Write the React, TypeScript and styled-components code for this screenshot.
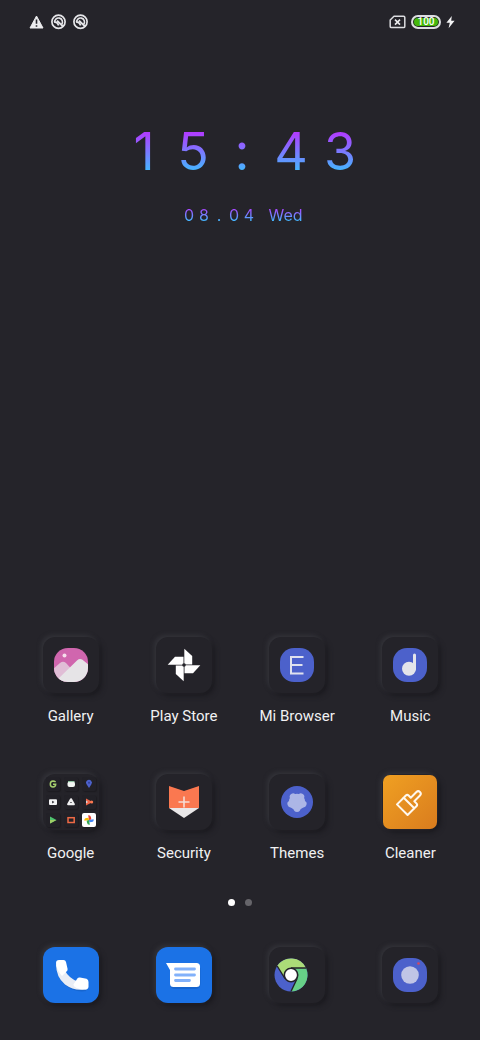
import React from 'react';
import styled, { createGlobalStyle, css } from 'styled-components';

const GlobalStyle = createGlobalStyle`
  *, *::before, *::after { box-sizing: border-box; }
  body {
    margin: 0;
    background: #25242a;
    color: #f1f1f2;
    font-family: Roboto, "Liberation Sans", sans-serif;
  }
`;

const Screen = styled.main`
  display: flex;
  flex-direction: column;
  min-height: 100vh;
  padding-bottom: 37px;
  background: #25242a;
`;

const StatusBar = styled.header`
  display: flex;
  justify-content: space-between;
  align-items: center;
  height: 44px;
  padding: 0 25px 0 28px;
`;

const StatusGroup = styled.div<{ $gap: number }>`
  display: flex;
  align-items: center;
  gap: ${(p) => p.$gap}px;
`;

const Battery = styled.span`
  display: flex;
  align-items: center;
  justify-content: center;
  width: 30px;
  height: 14px;
  border: 2px solid #dddde2;
  border-radius: 7px;
  background: #45b80c;
  box-shadow: inset 0 0 0 1px #25242a;
  color: #ffffff;
  font-size: 10px;
  font-weight: 500;
  line-height: 12px;
`;

const ClockWidget = styled.section`
  display: flex;
  flex-direction: column;
  align-items: center;
  padding: 76px 0 0 4px;
`;

const gradientText = css`
  display: flex;
  color: transparent;
  background-clip: text;
  -webkit-background-clip: text;
  font-family: Inter, "Liberation Sans", sans-serif;
`;

const Time = styled.time`
  ${gradientText}
  background-image: linear-gradient(#b13cff 20%, #3fbcff 82%);
  font-size: 52px;
  line-height: 64px;
`;

const DateLine = styled.time`
  ${gradientText}
  gap: 12px;
  margin-top: 21px;
  background-image: linear-gradient(#b13cff 15%, #3fbcff 82%);
  font-size: 16px;
  line-height: 20px;
`;

const Digits = styled.span`
  display: flex;
`;

const Digit = styled.span<{ $width: number }>`
  width: ${(p) => p.$width}px;
  text-align: center;
`;

const Spacer = styled.div`
  flex: 1;
  min-height: 40px;
`;

const AppGrid = styled.section`
  display: grid;
  grid-template-columns: repeat(4, 1fr);
  row-gap: 48px;
  padding: 0 13px 0 14px;
`;

const AppButton = styled.button`
  display: flex;
  flex-direction: column;
  align-items: center;
  gap: 13px;
  padding: 0;
  border: 0;
  background: none;
  color: inherit;
  font: inherit;
  cursor: pointer;
`;

const Tile = styled.span<{ $fill?: string }>`
  display: block;
  width: 56px;
  height: 56px;
  border-radius: 12px;
  background: ${(p) => p.$fill ?? '#242329'};
  box-shadow: -2px -2px 4px #333339, 3px 3px 5px #1c1b20;

  svg { display: block; }
`;

const Label = styled.span`
  font-size: 15px;
  line-height: 20px;
  white-space: nowrap;
`;

const FolderGrid = styled.span`
  display: grid;
  grid-template-columns: repeat(3, 14px);
  gap: 4px;
  padding: 3px;
`;

const MiniTile = styled.span<{ $fill?: string }>`
  display: block;
  width: 14px;
  height: 14px;
  border-radius: 2px;
  background: ${(p) => p.$fill ?? '#222127'};
  box-shadow: 1px 1px 1px #1d1c21;
`;

const Pager = styled.nav`
  display: flex;
  justify-content: center;
  gap: 10px;
  padding: 36px 0 41px;
`;

const Dot = styled.button<{ $active?: boolean }>`
  width: 7px;
  height: 7px;
  padding: 0;
  border: 0;
  border-radius: 50%;
  background: ${(p) => (p.$active ? '#ffffff' : '#66656a')};
`;

const Icon = ({ children }: { children: React.ReactNode }) => (
  <svg width="56" height="56" viewBox="0 0 56 56" aria-hidden="true">{children}</svg>
);

const Squircle = ({ fill }: { fill: string }) => (
  <rect x="11" y="11" width="34" height="34" rx="14" fill={fill} />
);

const WarningIcon = () => (
  <svg width="16" height="16" viewBox="0 0 16 16" aria-hidden="true">
    <path d="M8.500 2 15 14H2Z" fill="#ececee" stroke="#ececee" strokeLinejoin="round" />
    <path d="M8.500 5.600v4.200M8.500 11.200v1.600" stroke="#25242a" strokeWidth="1.600" />
  </svg>
);

const DialIcon = () => (
  <svg width="16" height="16" viewBox="0 0 16 16" aria-hidden="true">
    <circle cx="8.500" cy="7.800" r="6.600" fill="none" stroke="#e6e6e9" strokeWidth="1.700" />
    <path d="M4.800 8.800A3.900 3.900 0 1 1 11.600 10.400" fill="none" stroke="#e6e6e9" strokeWidth="1.600" />
    <path d="M7 6.600 13.200 12.600" stroke="#e6e6e9" strokeWidth="2" />
    <path d="M4.800 8.200Q7.600 8 8.600 11.400" fill="none" stroke="#e6e6e9" strokeWidth="1.700" />
  </svg>
);

const NoSimIcon = () => (
  <svg width="17" height="14" viewBox="0 0 17 14" aria-hidden="true">
    <path d="M5 1.200H14.600Q15.800 1.200 15.800 2.400V11.400Q15.800 12.600 14.600 12.600H2.400Q1.200 12.600 1.200 11.400V5Z" fill="none" stroke="#dcdce0" strokeWidth="1.500" strokeLinejoin="round" />
    <path d="M6 4.600 11 9.600M11 4.600 6 9.600" stroke="#ececee" strokeWidth="1.600" />
  </svg>
);

const BoltIcon = () => (
  <svg width="9" height="14" viewBox="0 0 9 14" aria-hidden="true">
    <path d="M5.800 1 .4 7.800H3.800L2.600 13.200 8.600 5.800H5.200Z" fill="#f4f4f5" />
  </svg>
);

const GalleryIcon = () => (
  <Icon>
    <clipPath id="gallery"><rect x="11" y="11" width="34" height="34" rx="14" /></clipPath>
    <g clipPath="url(#gallery)">
      <rect x="11" y="11" width="34" height="34" fill="#d066ae" />
      <path d="M10 32 17 26Q20 23.500 23 26L32 36 20 46H10Z" fill="#e0bdd6" />
      <path d="M14 43 34 23.500Q37.500 20.500 41 24L46 28V46H14Z" fill="#e6e4e7" />
      <circle cx="21.500" cy="18.500" r="2" fill="#f6dcec" />
    </g>
  </Icon>
);

const PinwheelIcon = () => (
  <Icon>
    {[0, 90, 180, 270].map((angle) => (
      <path key={angle} d="M28.300 27.500V11.700L36.200 19V27.500Z" fill="#ffffff" transform={`rotate(${angle} 28 28)`} />
    ))}
    <circle cx="28" cy="28" r="1.800" fill="#242329" />
  </Icon>
);

const BrowserIcon = () => (
  <Icon>
    <Squircle fill="#4c61cb" />
    <path d="M34.500 20H22V36.500H34.500M22 28H33.500" fill="none" stroke="#dfe1ee" strokeWidth="2" />
  </Icon>
);

const MusicIcon = () => (
  <Icon>
    <Squircle fill="#4c61cb" />
    <circle cx="27" cy="31.800" r="7" fill="#e3e4ea" />
    <path d="M32.500 18V32" stroke="#e3e4ea" strokeWidth="3" strokeLinecap="round" />
  </Icon>
);

const SecurityIcon = () => (
  <Icon>
    <path d="M13 12 28 17 43 12V34H13Z" fill="#fa7850" />
    <path d="M13 34H43L28 44Z" fill="#e9e7e8" />
    <path d="M28 22.500V33.500M22.500 28H33.500" stroke="#f6dcd4" strokeWidth="1.600" />
  </Icon>
);

const ThemesIcon = () => (
  <Icon>
    <circle cx="28" cy="28" r="16" fill="#4c61cb" />
    <g fill="#acb6e6">
      <circle cx="28" cy="28" r="8.200" />
      {[0, 72, 144, 216, 288].map((angle) => (
        <circle key={angle} cx="28" cy="34.500" r="3.400" transform={`rotate(${angle} 28 28)`} />
      ))}
    </g>
  </Icon>
);

const CleanerIcon = () => (
  <Icon>
    <defs>
      <linearGradient id="amber" x1="0" y1="0" x2="1" y2="1">
        <stop offset="0" stopColor="#f0a022" />
        <stop offset="1" stopColor="#d97c1e" />
      </linearGradient>
    </defs>
    <rect x="1" y="1" width="54" height="54" rx="7" fill="url(#amber)" />
    <g transform="translate(27 29) rotate(45)" fill="none" stroke="#fff8ee" strokeWidth="2" strokeLinejoin="round">
      <path d="M-7.500 0V-3Q-7.500 -5 -5.500 -5H-2.500V-13Q-2.500 -15.500 0 -15.500Q2.500 -15.500 2.500 -13V-5H5.500Q7.500 -5 7.500 -3V0Z" />
      <path d="M-7.500 0V9.500H7.500V0" />
    </g>
  </Icon>
);

const PhoneIcon = () => (
  <Icon>
    <path d="M13 20Q16 31 25 37Q34 43.500 44 41.500L43 44Q32 46 22 38Q14 30 13 20Z" fill="#145ec0" opacity="0.6" />
    <path d="M13 17Q13 30 22 37.500Q31 44 41 42.500L36 35Q26 32 21 22Z" fill="#e9edf5" />
    <path d="M13 16Q13 13 16 13H20.500Q22.500 13 23 15L24.600 22Q24.800 23.500 23.500 24.500L19 29Q13 22 13 16Z" fill="#ffffff" />
    <path d="M42 42.800Q45.500 42.500 45.500 39.500V35Q45.500 32.500 43.500 31.800L37 30.500Q35.300 30.200 34.300 31.500L30.500 37.500Q30 41.500 42 42.800Z" fill="#ffffff" />
  </Icon>
);

const MessagesIcon = () => (
  <Icon>
    <path d="M14 20V37Q14 42 19 42H39Q44.500 42 44.500 37V21Z" fill="#145ec0" opacity="0.6" />
    <path d="M10 16H40.500Q44 16 44 19.500V36.500Q44 40 40.500 40H17.500Q14 40 14 36.500V23Z" fill="#ffffff" />
    <path d="M19.500 22H38.500M19.500 28H38.500M19.500 33.500H33.500" stroke="#82b1fa" strokeWidth="2.800" strokeLinecap="round" />
  </Icon>
);

const ChromeIcon = () => (
  <Icon>
    <g transform="translate(22 28)">
      <circle r="16.500" fill="#4c61cb" />
      <path d="M0 -7H15A16.500 16.500 0 0 1 0 16.500L6.100 3.500A7 7 0 0 0 0 -7Z" fill="#67d087" />
      <path d="M-13.800 -9A16.500 16.500 0 0 1 15 -7H0Q-6 -6 -6.100 3.500Z" fill="#abdc78" />
      <path d="M15 -7H0M-13.800 -9 -6.100 3.500M0 16.500 6.100 3.500" stroke="#242329" strokeWidth="1.400" />
      <circle r="6.700" fill="#ffffff" stroke="#242329" strokeWidth="1.600" />
    </g>
  </Icon>
);

const CameraIcon = () => (
  <Icon>
    <Squircle fill="#4c61cb" />
    <circle cx="28" cy="28" r="8.800" fill="#c0c5e6" />
    <circle cx="36.500" cy="16.500" r="1.300" fill="#d8455c" />
  </Icon>
);

const miniIcons: { fill?: string; art: React.ReactNode }[] = [
  { art: <path d="M9.600 5Q8.500 4 7 4Q4.300 4.200 4.300 7Q4.300 10 7 10Q9.600 9.900 9.700 7.300H7" fill="none" stroke="#a6cf6e" strokeWidth="1.500" /> },
  { art: <><rect x="3.500" y="4.500" width="7.500" height="5.500" rx="2" fill="#f2f6f3" /><path d="M4 4.600H10.500" stroke="#8fc9a4" /></> },
  { art: <><path d="M7 11 4.700 7.500A2.900 2.900 0 1 1 9.300 7.500Z" fill="#4c61cb" /><circle cx="7" cy="5.700" r="1" fill="#323f9a" /></> },
  { art: <><rect x="3" y="4.200" width="8" height="5.800" rx="1" fill="#f3f3f4" /><path d="M6.200 5.700V8.500L8.400 7.100Z" fill="#242329" /></> },
  { art: <path d="M7 4.300 9.800 9.200H4.200Z" fill="none" stroke="#f0f0f1" strokeWidth="2.200" strokeLinejoin="round" /> },
  { art: <><path d="M4 3.500 10.500 7 4 10.500Z" fill="#ef6548" /><path d="M4 5.500V8.500L6 7Z" fill="#d8d8dc" /><circle cx="9.700" cy="7" r="1.500" fill="#fa7850" /></> },
  { art: <><path d="M4 3.500 10.500 7 4 10.500Z" fill="#4fc46f" /><path d="M4 7 10.500 7 4 10.500Z" fill="#9fce66" /></> },
  { art: <rect x="4" y="4.700" width="6.200" height="4.800" fill="none" stroke="#ef6a45" strokeWidth="1.500" /> },
  {
    fill: '#ffffff',
    art: ['#ea4335', '#4285f4', '#34a853', '#fbbc04'].map((color, i) => (
      <path key={color} d="M7 7V2.300A2.400 2.400 0 0 1 9.400 4.700V7Z" fill={color} transform={`rotate(${i * 90 - 10} 7 7)`} />
    )),
  },
];

const GoogleFolder = () => (
  <FolderGrid>
    {miniIcons.map((item, i) => (
      <MiniTile key={i} $fill={item.fill}>
        <svg width="14" height="14" viewBox="0 0 14 14" aria-hidden="true">{item.art}</svg>
      </MiniTile>
    ))}
  </FolderGrid>
);

interface AppItem {
  name: string;
  icon: React.ReactNode;
  fill?: string;
}

const apps: AppItem[] = [
  { name: 'Gallery', icon: <GalleryIcon /> },
  { name: 'Play Store', icon: <PinwheelIcon /> },
  { name: 'Mi Browser', icon: <BrowserIcon /> },
  { name: 'Music', icon: <MusicIcon /> },
  { name: 'Google', icon: <GoogleFolder /> },
  { name: 'Security', icon: <SecurityIcon /> },
  { name: 'Themes', icon: <ThemesIcon /> },
  { name: 'Cleaner', icon: <CleanerIcon /> },
];

const dockApps: AppItem[] = [
  { name: 'Phone', icon: <PhoneIcon />, fill: '#1b72e6' },
  { name: 'Messages', icon: <MessagesIcon />, fill: '#1b72e6' },
  { name: 'Chrome', icon: <ChromeIcon /> },
  { name: 'Camera', icon: <CameraIcon /> },
];

const SpacedDigits = ({ text, width }: { text: string; width: number }) => (
  <Digits>
    {[...text].map((char, i) => (
      <Digit key={i} $width={width}>{char}</Digit>
    ))}
  </Digits>
);

export default function App() {
  return (
    <>
      <GlobalStyle />
      <Screen>
        <StatusBar>
          <StatusGroup $gap={6}>
            <WarningIcon />
            <DialIcon />
            <DialIcon />
          </StatusGroup>
          <StatusGroup $gap={5}>
            <NoSimIcon />
            <Battery>100</Battery>
            <BoltIcon />
          </StatusGroup>
        </StatusBar>

        <ClockWidget>
          <Time><SpacedDigits text="15:43" width={49} /></Time>
          <DateLine>
            <SpacedDigits text="08.04" width={15} />
            <span>Wed</span>
          </DateLine>
        </ClockWidget>

        <Spacer />

        <AppGrid>
          {apps.map((app) => (
            <AppButton key={app.name} type="button">
              <Tile $fill={app.fill}>{app.icon}</Tile>
              <Label>{app.name}</Label>
            </AppButton>
          ))}
        </AppGrid>

        <Pager aria-label="Home screen pages">
          <Dot type="button" $active aria-label="Page 1" />
          <Dot type="button" aria-label="Page 2" />
        </Pager>

        <AppGrid as="footer">
          {dockApps.map((app) => (
            <AppButton key={app.name} type="button" aria-label={app.name}>
              <Tile $fill={app.fill}>{app.icon}</Tile>
            </AppButton>
          ))}
        </AppGrid>
      </Screen>
    </>
  );
}
